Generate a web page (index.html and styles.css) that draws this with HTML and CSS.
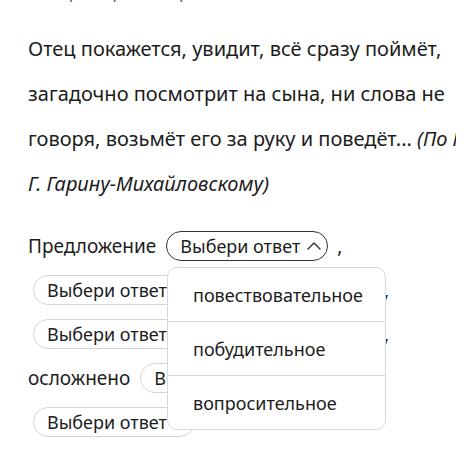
FILE: index.html
```html
<!DOCTYPE html>
<html lang="ru">
<head>
<meta charset="utf-8">
<link rel="stylesheet" href="styles.css">
</head>
<body>
<div class="page">
  <p class="hint">Выбери верные варианты из списков.</p>
  <p class="text">Отец покажется, увидит, всё сразу поймёт, загадочно посмотрит на сына, ни слова не говоря, возьмёт его за руку и поведёт... <i>(По Н. Г. Гарину-Михайловскому)</i></p>
  <div class="task">
    <div class="row">
      <span class="word">Предложение</span>
      <span class="pill active"><span class="pill-label">Выбери ответ</span><svg class="chev" width="14" height="8" viewBox="0 0 14 8"><polyline points="1,7 7,1 13,7" fill="none" stroke="#333" stroke-width="1.4" stroke-linecap="round" stroke-linejoin="round"/></svg></span>
      <span class="punct">,</span>
    </div>
    <div class="row">
      <span class="pill"><span class="pill-label">Выбери ответ</span><svg class="chev" width="14" height="8" viewBox="0 0 14 8"><polyline points="1,1 7,7 13,1" fill="none" stroke="#333" stroke-width="1.4" stroke-linecap="round" stroke-linejoin="round"/></svg></span>
      <span class="pill"><span class="pill-label">Выбери ответ</span><svg class="chev" width="14" height="8" viewBox="0 0 14 8"><polyline points="1,1 7,7 13,1" fill="none" stroke="#333" stroke-width="1.4" stroke-linecap="round" stroke-linejoin="round"/></svg></span>
      <span class="punct">,</span>
    </div>
    <div class="row">
      <span class="pill"><span class="pill-label">Выбери ответ</span><svg class="chev" width="14" height="8" viewBox="0 0 14 8"><polyline points="1,1 7,7 13,1" fill="none" stroke="#333" stroke-width="1.4" stroke-linecap="round" stroke-linejoin="round"/></svg></span>
      <span class="pill"><span class="pill-label">Выбери ответ</span><svg class="chev" width="14" height="8" viewBox="0 0 14 8"><polyline points="1,1 7,7 13,1" fill="none" stroke="#333" stroke-width="1.4" stroke-linecap="round" stroke-linejoin="round"/></svg></span>
      <span class="punct">,</span>
    </div>
    <div class="row">
      <span class="word">осложнено</span>
      <span class="pill"><span class="pill-label">Выбери ответ</span><svg class="chev" width="14" height="8" viewBox="0 0 14 8"><polyline points="1,1 7,7 13,1" fill="none" stroke="#333" stroke-width="1.4" stroke-linecap="round" stroke-linejoin="round"/></svg></span>
    </div>
    <div class="row">
      <span class="pill"><span class="pill-label">Выбери ответ</span><svg class="chev" width="14" height="8" viewBox="0 0 14 8"><polyline points="1,1 7,7 13,1" fill="none" stroke="#333" stroke-width="1.4" stroke-linecap="round" stroke-linejoin="round"/></svg></span>
    </div>
    <ul class="dropdown">
      <li class="option">повествовательное</li>
      <li class="option">побудительное</li>
      <li class="option">вопросительное</li>
    </ul>
  </div>
</div>
</body>
</html>
```
FILE: styles.css
```css
html, body {
  margin: 0;
  padding: 0;
  background: #fff;
}
body {
  font-family: "Noto Sans", "Open Sans", sans-serif;
  color: #1c1c1c;
}
.page {
  width: 428px;
  height: 458px;
  padding-left: 28px;
  overflow: hidden;
}
.hint {
  margin: -21px 0 0;
  font-size: 18px;
  line-height: 24px;
  font-style: italic;
  color: #666;
  white-space: nowrap;
}
.text {
  width: 450px;
  margin: 23px 0 0;
  font-size: 20px;
  line-height: 45px;
}
.text i {
  font-style: italic;
}
.task {
  position: relative;
  margin-top: 18px;
  font-size: 19px;
}
.row {
  display: flex;
  align-items: center;
  height: 44px;
}
.word {
  margin-right: 5px;
}
.pill {
  box-sizing: border-box;
  width: 162px;
  height: 30px;
  margin-left: 5px;
  padding: 0 6px 0 13px;
  display: flex;
  align-items: center;
  justify-content: space-between;
  border: 1.5px solid #d6d6d6;
  border-radius: 15px;
  font-size: 18px;
  background: #fff;
}
.pill + .pill {
  margin-left: 18px;
}
.pill.active {
  border-color: #333;
}
.chev {
  display: block;
}
.punct {
  margin-left: 9px;
}
.dropdown {
  position: absolute;
  top: 43px;
  left: 139px;
  width: 217px;
  margin: 0;
  padding: 0;
  list-style: none;
  background: #fff;
  border: 1px solid #d8d8d8;
  border-radius: 10px;
  font-size: 18px;
}
.option {
  height: 53px;
  padding-left: 25px;
  display: flex;
  align-items: center;
  border-top: 1px solid #d8d8d8;
}
.option:first-child {
  border-top: none;
}
```
